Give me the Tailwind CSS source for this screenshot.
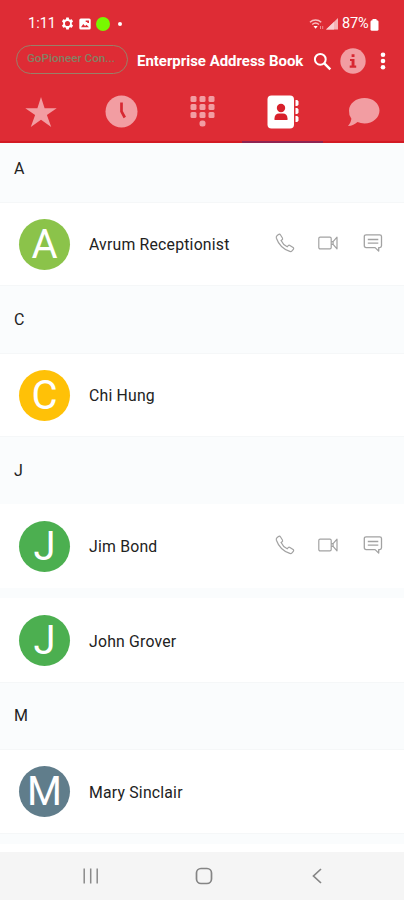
<!DOCTYPE html>
<html lang="en">
<head>
<meta charset="utf-8">
<title>Enterprise Address Book</title>
<script src="https://cdn.jsdelivr.net/npm/@tailwindcss/browser@4"></script>
</head>
<body class="w-[404px] h-[900px] overflow-hidden bg-white font-['Roboto',sans-serif] text-[#222]">
<svg class="hidden">
  <symbol id="phone" viewBox="0 0 20 20"><path d="M1.900 2.800 3.500 1.500c.7-.5 1.400-.4 1.900.3L7.400 5c.4.700.3 1.300-.3 1.700l-1 .8c1 2.300 3.500 5 6.100 6.300l1-1.100c.5-.5 1.100-.6 1.700-.2l3.200 2.100c.7.500.7 1.100.2 1.700l-1.300 1.500c-.6.700-1.300.9-2.200.6C8.900 16.400 3.600 11.300 1.400 5.200c-.3-.9-.1-1.800.5-2.400Z" fill="none" stroke="#a2a2a2" stroke-width="1.200"/></symbol>
  <symbol id="video" viewBox="0 0 20 14"><g fill="none" stroke="#a2a2a2" stroke-width="1.200" stroke-linejoin="round"><rect x=".8" y="1.100" width="12.400" height="11.800" rx="1.300"/><path d="M13.200 5.600h1.900L19 1.200v11.600l-3.900-4.400h-1.900M15.100 5.600v2.800"/></g></symbol>
  <symbol id="note" viewBox="0 0 20 18"><path d="M3.100.8h13.600c1.100 0 1.800.7 1.800 1.800v9.200c0 1.100-.7 1.800-1.800 1.800h-1v3.500l-3.600-3.500h-9c-1.100 0-1.800-.7-1.800-1.800V2.600C1.300 1.500 2 .8 3.100.8ZM4.800 5.500h10.500M4.800 9.200h10.500" fill="none" stroke="#a2a2a2" stroke-width="1.300" stroke-linejoin="round"/></symbol>
</svg>
<div class="flex h-full flex-col">
  <header class="flex h-[143px] shrink-0 flex-col border-b-2 border-[#d31b24] bg-[#de2c35]">
    <div class="flex h-[44px] shrink-0 items-center pl-[28px] pr-[25px] pt-[3px] text-white">
      <span class="w-[32px] pt-[1px] text-[14.500px] leading-none whitespace-nowrap">1:11</span>
      <svg class="ml-[1px] size-[13px]" viewBox="0 0 24 24" fill="#fff"><path fill-rule="evenodd" d="M9.700 1h4.600l.6 3 2 1.200 3-1 2.300 4-2.300 2.200v3.200l2.300 2.200-2.300 4-3-1-2 1.200-.6 3H9.700l-.6-3-2-1.200-3 1-2.300-4 2.300-2.200v-3.200L1.800 8.200l2.300-4 3 1 2-1.200ZM12 7.300a4.700 4.700 0 1 0 0 9.400 4.700 4.700 0 0 0 0-9.400Z"/></svg>
      <svg class="ml-[5px] size-[12px]" viewBox="0 0 12 12"><rect x=".3" y=".5" width="11.400" height="11" rx="1.500" fill="#fff"/><path d="M2 9.300 4.300 6l1.700 2 1.500-1.200L10 9.300ZM6.700 2.500H10V5H8.300V4H6.700Z" fill="#de2c35"/></svg>
      <span class="ml-[5px] size-[14px] rounded-full bg-[#78f800]"></span>
      <span class="ml-[8px] size-[4px] rounded-full bg-white"></span>
      <svg class="ml-auto h-[12px] w-[15px]" viewBox="0 0 15 12" fill="none" stroke="#f7bec1" stroke-width="1.500"><path d="M1 4.200c3.200-2.900 8-2.900 11.200 0M3.200 6.500c2-1.700 4.800-1.700 6.800 0"/><path d="M4.500 8 6.600 10.800 8.700 8Z" fill="#fff" stroke="none"/><path d="M11.500 8v3M13.700 8v3" stroke-width="1" stroke="#f08d92"/></svg>
      <svg class="ml-[2px] size-[12px]" viewBox="0 0 12 12"><path d="M0 11.500 12 0v11.500Z" fill="#f5b3b6"/><path d="M0 11.500 8 4v7.500Z" fill="#f9cfd1"/></svg>
      <span class="ml-[4px] w-[28px] pt-[1px] text-[14.500px] leading-none tracking-[-0.2px]">87%</span>
      <svg class="mt-[2px] h-[12px] w-[9px]" viewBox="0 0 9 12" fill="#fff"><rect x="2.500" width="4" height="3"/><rect x=".5" y="1.200" width="8" height="10.500" rx="1.500"/></svg>
    </div>
    <div class="flex h-[34px] shrink-0 items-center pl-[16px] pr-[17px]">
      <div class="-mt-[3px] flex h-[29px] w-[112px] items-center justify-center rounded-full border-[1.500px] border-[#998068] pr-[2px] pb-[2px] text-[11.700px] font-medium whitespace-nowrap text-[#858064]">GoPioneer Con...</div>
      <h1 class="ml-[9px] w-[168px] text-[14.950px] font-bold whitespace-nowrap text-white">Enterprise Address Book</h1>
      <svg class="ml-[8px] size-[19px]" viewBox="0 0 19 19" fill="none" stroke="#fff"><circle cx="7.300" cy="7.300" r="5.400" stroke-width="2"/><path d="m11.300 11.300 6 6" stroke-width="2.500"/></svg>
      <svg class="ml-[8px] size-[26px]" viewBox="0 0 26 26"><circle cx="13" cy="13" r="12.700" fill="#f29da2"/><path d="M11.600 6.200h2.900V9h-2.900ZM10 10.900h4.500v6.700h1.700v2.100H9.700v-2.100h1.900v-4.600H10Z" fill="#d72832"/></svg>
      <svg class="ml-[14px] h-[18px] w-[6px]" viewBox="0 0 6 18" fill="#fff"><circle cx="3" cy="2.800" r="2.300"/><circle cx="3" cy="9" r="2.300"/><circle cx="3" cy="15.200" r="2.300"/></svg>
    </div>
    <nav class="grid h-[63px] shrink-0 grid-cols-5 justify-items-center pt-[4px]">
      <div class="flex w-full items-center justify-center pl-[1px]"><svg class="h-[32px] w-[34px]" viewBox="0 0 34 32" fill="#f29da2"><path d="M17 1 20.600 12.200H32.700L22.900 19.100 27.200 31 17 23.700 6.800 31l4.300-11.900L1.300 12.200h12.100Z"/></svg></div>
      <div class="flex w-full items-center justify-center"><svg class="size-[33px]" viewBox="0 0 33 33"><circle cx="16.500" cy="16.500" r="16" fill="#f29da2"/><path d="M16.500 7.500v9l3.300 6" fill="none" stroke="#d72832" stroke-width="2.700"/></svg></div>
      <div class="flex w-full items-center justify-center pl-[1px]"><svg class="h-[31px] w-[25px]" viewBox="0 0 25 31" fill="#f29da2"><rect x=".5" y="0" width="6" height="6" rx="1.500"/><rect x="9.500" y="0" width="6" height="6" rx="1.500"/><rect x="18.500" y="0" width="6" height="6" rx="1.500"/><rect x=".5" y="8" width="6" height="6" rx="1.500"/><rect x="9.500" y="8" width="6" height="6" rx="1.500"/><rect x="18.500" y="8" width="6" height="6" rx="1.500"/><rect x=".5" y="16" width="6" height="6" rx="1.500"/><rect x="9.500" y="16" width="6" height="6" rx="1.500"/><rect x="18.500" y="16" width="6" height="6" rx="1.500"/><rect x="9.500" y="24.500" width="6" height="6" rx="2.500"/></svg></div>
      <div class="relative flex w-full items-center justify-center pl-[1px]"><svg class="h-[34px] w-[32px]" viewBox="0 0 32 34"><rect x=".5" y=".5" width="26.500" height="33" rx="4" fill="#fff"/><circle cx="14" cy="13" r="4.200" fill="#d8202b"/><path d="M7.500 25v-1.800c0-3 2-4.700 4.500-4.700h4c2.500 0 4.500 1.700 4.500 4.700V25Z" fill="#d8202b"/><path d="M28.500 5h1.700l1.300 1.300v3.400L30.200 11h-1.700ZM28.500 13h1.700l1.300 1.300v3.400L30.200 19h-1.700ZM28.500 21h1.700l1.300 1.300v3.400L30.200 27h-1.700Z" fill="#fff"/></svg><span class="absolute inset-x-0 -bottom-[2px] h-[2px] bg-[#8d2452]"></span></div>
      <div class="flex w-full items-center justify-center"><svg class="h-[30px] w-[34px]" viewBox="0 0 34 30" fill="#f29da2"><path d="M17.500 1C26 1 32.500 6.500 32.500 13.600S26 26.500 17.500 26.500c-2.500 0-5-.5-7-1.400C8 27.500 5 29 1 29c1.500-1.600 3-4 3.400-7.200A12 12 0 0 1 2 13.600C2 6.500 9 1 17.500 1Z"/></svg></div>
    </nav>
  </header>
  <main class="flex flex-1 flex-col bg-[#fafcfd]">
    <h2 class="flex h-[59px] shrink-0 items-center pb-[8px] pl-[14px] text-[16px]">A</h2>
    <div class="flex h-[84px] shrink-0 items-center border-y border-[#f5f7f8] bg-white pl-[19px] pr-[21px]">
      <span class="flex size-[51px] items-center justify-center rounded-full bg-[#8bc34a] pt-[1px] text-[40px] leading-none text-white">A</span>
      <span class="ml-[19px] pt-[1px] text-[15.800px] tracking-[0.200px]">Avrum Receptionist</span>
      <div class="ml-auto flex items-center pb-[2px]"><svg class="size-[20px]"><use href="#phone"/></svg><svg class="ml-[23px] h-[14px] w-[20px]"><use href="#video"/></svg><svg class="ml-[25px] h-[18px] w-[20px]"><use href="#note"/></svg></div>
    </div>
    <h2 class="flex h-[67px] shrink-0 items-center pl-[14px] text-[16px]">C</h2>
    <div class="flex h-[84px] shrink-0 items-center border-y border-[#f5f7f8] bg-white pl-[19px]">
      <span class="flex size-[51px] items-center justify-center rounded-full bg-[#ffc107] pt-[1px] text-[40px] leading-none text-white">C</span>
      <span class="ml-[19px] pt-[1px] text-[15.800px] tracking-[0.200px]">Chi Hung</span>
    </div>
    <h2 class="flex h-[67px] shrink-0 items-center pl-[14px] text-[16px]">J</h2>
    <div class="flex h-[84px] shrink-0 items-center bg-white pl-[19px] pr-[21px]">
      <span class="flex size-[51px] items-center justify-center rounded-full bg-[#4caf50] pt-[1px] text-[40px] leading-none text-white">J</span>
      <span class="ml-[19px] pt-[1px] text-[15.800px] tracking-[0.200px]">Jim Bond</span>
      <div class="ml-auto flex items-center pb-[2px]"><svg class="size-[20px]"><use href="#phone"/></svg><svg class="ml-[23px] h-[14px] w-[20px]"><use href="#video"/></svg><svg class="ml-[25px] h-[18px] w-[20px]"><use href="#note"/></svg></div>
    </div>
    <div class="mt-[10px] flex h-[85px] shrink-0 items-center border-b border-[#f5f7f8] bg-white pl-[19px]">
      <span class="flex size-[51px] items-center justify-center rounded-full bg-[#4caf50] pt-[1px] text-[40px] leading-none text-white">J</span>
      <span class="ml-[19px] pt-[3px] text-[15.800px] tracking-[0.200px]">John Grover</span>
    </div>
    <h2 class="flex h-[66px] shrink-0 items-center pl-[14px] text-[16px]">M</h2>
    <div class="flex h-[85px] shrink-0 items-center border-y border-[#f5f7f8] bg-white pl-[19px]">
      <span class="flex size-[51px] items-center justify-center rounded-full bg-[#607d8b] pt-[1px] text-[40px] leading-none text-white">M</span>
      <span class="ml-[19px] pt-[3px] text-[15.800px] tracking-[0.200px]">Mary Sinclair</span>
    </div>
    <div class="mt-[10px] h-[8px] shrink-0 bg-white"></div>
  </main>
  <footer class="flex h-[48px] shrink-0 items-center bg-[#f5f5f5] pl-[83px]">
    <svg class="h-[16px] w-[16px]" viewBox="0 0 16 16" stroke="#8a8a8a" stroke-width="1.500"><path d="M1.200 .5v15M7.700 .5v15M14.200 .5v15"/></svg>
    <svg class="ml-[96px] size-[18px]" viewBox="0 0 18 18" fill="none" stroke="#858585" stroke-width="1.700"><rect x="1.500" y="1.500" width="15" height="15" rx="4.500"/></svg>
    <svg class="ml-[99px] h-[16px] w-[10px]" viewBox="0 0 10 16" fill="none" stroke="#858585" stroke-width="1.700"><path d="M9 1 1.500 8 9 15"/></svg>
  </footer>
</div>
</body>
</html>
